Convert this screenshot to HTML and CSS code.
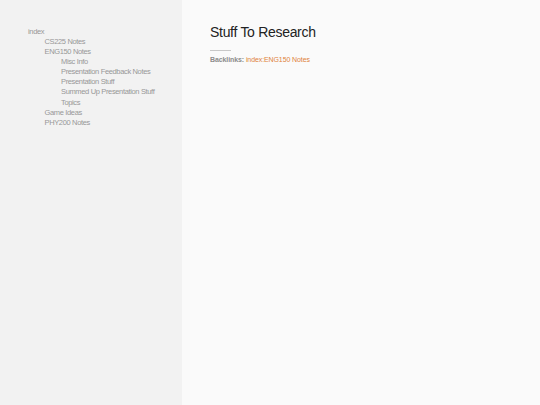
FILE: index.html
```html
<!DOCTYPE html>
<html>
<head>
<meta charset="utf-8">
<link rel="stylesheet" href="styles.css">
</head>
<body>
<div class="layout">
  <nav class="sidebar">
    <ul class="tree">
      <li><a>index</a>
        <ul>
          <li><a>CS225 Notes</a></li>
          <li><a>ENG150 Notes</a>
            <ul>
              <li><a>Misc Info</a></li>
              <li><a>Presentation Feedback Notes</a></li>
              <li><a>Presentation Stuff</a></li>
              <li><a>Summed Up Presentation Stuff</a></li>
              <li><a>Topics</a></li>
            </ul>
          </li>
          <li><a>Game Ideas</a></li>
          <li><a>PHY200 Notes</a></li>
        </ul>
      </li>
    </ul>
  </nav>
  <main class="content">
    <h1 class="title">Stuff To Research</h1>
    <hr class="rule">
    <p class="backlinks"><b>Backlinks:</b> <a>index:ENG150 Notes</a></p>
  </main>
</div>
</body>
</html>
```
FILE: styles.css
```css
html, body {
  margin: 0;
  padding: 0;
  height: 100%;
}
body {
  font-family: "Liberation Sans", Arial, sans-serif;
  background: #fafafa;
}
.layout {
  display: flex;
  height: 405px;
}
.sidebar {
  width: 182px;
  background: #f2f2f2;
  padding: 26.5px 0 0 28px;
  box-sizing: border-box;
  flex: none;
}
.tree, .tree ul {
  list-style: none;
  margin: 0;
  padding: 0;
}
.tree ul {
  padding-left: 16.5px;
}
.tree a {
  display: block;
  font-size: 7.5px;
  letter-spacing: -0.35px;
  line-height: 10.15px;
  color: #989898;
  white-space: nowrap;
}
.content {
  flex: 1;
  padding: 24px 0 0 28px;
}
.title {
  margin: 0;
  font-weight: normal;
  font-size: 14px;
  letter-spacing: -0.3px;
  line-height: 17px;
  color: #222;
}
.rule {
  margin: 9px 0 0 0;
  width: 21px;
  border: 0;
  border-top: 1px solid #c8c8c8;
  height: 0;
}
.backlinks {
  margin: 4px 0 0 0;
  font-size: 7px;
  letter-spacing: -0.1px;
  line-height: 9px;
  color: #8c8c8c;
}
.backlinks a {
  color: #e0823a;
}
```
